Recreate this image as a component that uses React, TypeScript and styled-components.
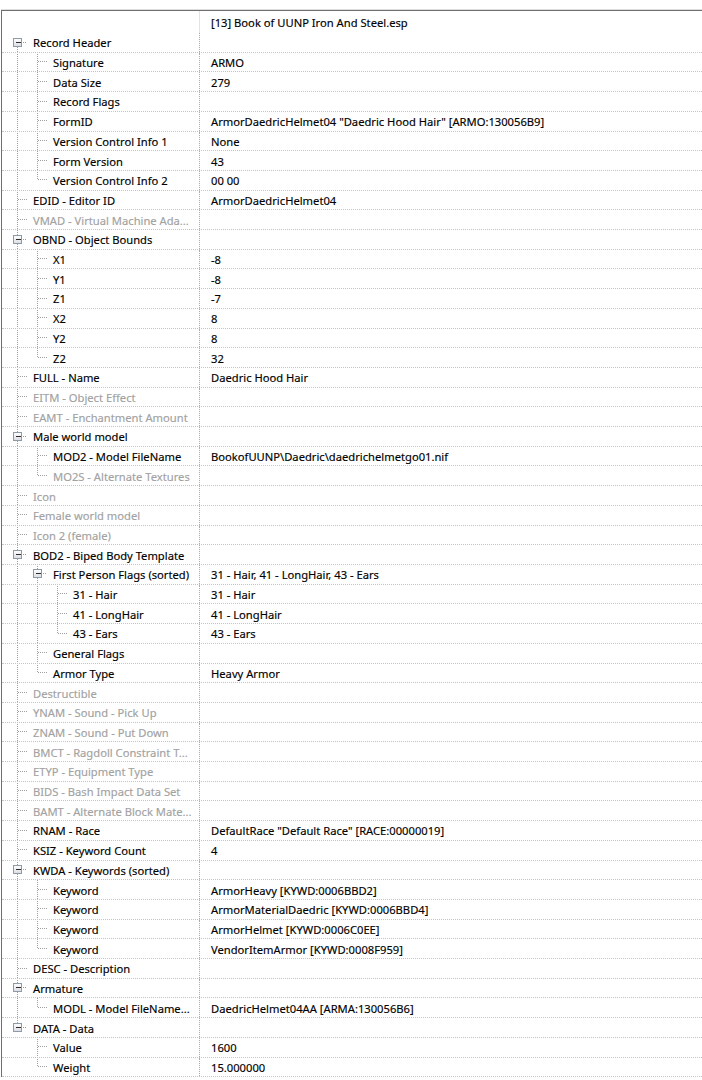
import React from 'react';
import styled, { createGlobalStyle } from 'styled-components';

const ROW = 19.71;
const INDENT = 20;

type Node = { label: string; value?: string; dim?: boolean; children?: Node[] };

type FlatRow = {
  node: Node;
  level: number;
  trail: boolean[];
  hasNext: boolean;
  isFirst: boolean;
};

const kw = (value: string): Node => ({ label: 'Keyword', value });
const off = (label: string): Node => ({ label, dim: true });

const tree: Node[] = [
  {
    label: 'Record Header',
    children: [
      { label: 'Signature', value: 'ARMO' },
      { label: 'Data Size', value: '279' },
      { label: 'Record Flags' },
      { label: 'FormID', value: 'ArmorDaedricHelmet04 "Daedric Hood Hair" [ARMO:130056B9]' },
      { label: 'Version Control Info 1', value: 'None' },
      { label: 'Form Version', value: '43' },
      { label: 'Version Control Info 2', value: '00 00' },
    ],
  },
  { label: 'EDID - Editor ID', value: 'ArmorDaedricHelmet04' },
  off('VMAD - Virtual Machine Ada...'),
  {
    label: 'OBND - Object Bounds',
    children: [
      { label: 'X1', value: '-8' },
      { label: 'Y1', value: '-8' },
      { label: 'Z1', value: '-7' },
      { label: 'X2', value: '8' },
      { label: 'Y2', value: '8' },
      { label: 'Z2', value: '32' },
    ],
  },
  { label: 'FULL - Name', value: 'Daedric Hood Hair' },
  off('EITM - Object Effect'),
  off('EAMT - Enchantment Amount'),
  {
    label: 'Male world model',
    children: [
      { label: 'MOD2 - Model FileName', value: 'BookofUUNP\\Daedric\\daedrichelmetgo01.nif' },
      off('MO2S - Alternate Textures'),
    ],
  },
  off('Icon'),
  off('Female world model'),
  off('Icon 2 (female)'),
  {
    label: 'BOD2 - Biped Body Template',
    children: [
      {
        label: 'First Person Flags (sorted)',
        value: '31 - Hair, 41 - LongHair, 43 - Ears',
        children: [
          { label: '31 - Hair', value: '31 - Hair' },
          { label: '41 - LongHair', value: '41 - LongHair' },
          { label: '43 - Ears', value: '43 - Ears' },
        ],
      },
      { label: 'General Flags' },
      { label: 'Armor Type', value: 'Heavy Armor' },
    ],
  },
  off('Destructible'),
  off('YNAM - Sound - Pick Up'),
  off('ZNAM - Sound - Put Down'),
  off('BMCT - Ragdoll Constraint T...'),
  off('ETYP - Equipment Type'),
  off('BIDS - Bash Impact Data Set'),
  off('BAMT - Alternate Block Mate...'),
  { label: 'RNAM - Race', value: 'DefaultRace "Default Race" [RACE:00000019]' },
  { label: 'KSIZ - Keyword Count', value: '4' },
  {
    label: 'KWDA - Keywords (sorted)',
    children: [
      kw('ArmorHeavy [KYWD:0006BBD2]'),
      kw('ArmorMaterialDaedric [KYWD:0006BBD4]'),
      kw('ArmorHelmet [KYWD:0006C0EE]'),
      kw('VendorItemArmor [KYWD:0008F959]'),
    ],
  },
  { label: 'DESC - Description' },
  {
    label: 'Armature',
    children: [{ label: 'MODL - Model FileName...', value: 'DaedricHelmet04AA [ARMA:130056B6]' }],
  },
  {
    label: 'DATA - Data',
    children: [
      { label: 'Value', value: '1600' },
      { label: 'Weight', value: '15.000000' },
    ],
  },
];

const flatten = (nodes: Node[], level = 0, trail: boolean[] = [], out: FlatRow[] = []) => {
  nodes.forEach((node, i) => {
    const hasNext = i < nodes.length - 1;
    out.push({ node, level, trail, hasNext, isFirst: level === 0 && i === 0 });
    if (node.children) flatten(node.children, level + 1, [...trail, hasNext], out);
  });
  return out;
};

const rows = flatten(tree);

const GlobalStyle = createGlobalStyle`
  html, body {
    margin: 0;
    background: #ffffff;
  }
  body {
    font-family: "Noto Sans", "Open Sans", sans-serif;
    font-size: 11.2px;
    color: #000000;
    -webkit-text-stroke: 0.15px currentColor;
  }
`;

const Page = styled.div`
  padding-top: 9px;
  padding-left: 1px;
  width: 702px;
  box-sizing: border-box;
`;

const Frame = styled.div`
  border-top: 1px solid #dedede;
`;

const Grid = styled.div`
  border-top: 1px solid #6f6f6f;
  border-left: 1px solid #6f6f6f;
`;

const HeaderRow = styled.div`
  display: grid;
  grid-template-columns: 198px 1fr;
  height: 22px;
`;

const HeaderCell = styled.div<{ $first?: boolean }>`
  display: flex;
  align-items: center;
  padding-top: 1px;
  padding-left: ${(p) => (p.$first ? '0' : '11px')};
  border-right: ${(p) => (p.$first ? '1px solid #e3e3e3' : 'none')};
  white-space: nowrap;
  overflow: hidden;
`;

const Row = styled.div`
  display: grid;
  grid-template-columns: 198px 1fr;
  height: ${ROW}px;
  box-sizing: border-box;
  border-bottom: 1px dotted #c4c4c4;
`;

const NameCell = styled.div`
  display: flex;
  align-items: center;
  border-right: 1px dotted #a9a9a9;
  overflow: hidden;
  white-space: nowrap;
`;

const Label = styled.span<{ $dim?: boolean }>`
  margin-left: 6px;
  padding-top: 1px;
  color: ${(p) => (p.$dim ? '#a2a2a2' : '#000000')};
`;

const ValueCell = styled.div`
  display: flex;
  align-items: center;
  padding-top: 1px;
  padding-left: 11px;
  white-space: nowrap;
  overflow: hidden;
`;

const Guides = styled.svg`
  flex-shrink: 0;
  display: block;
`;

const LINE = '#a0a0a0';

const TreeGuide = ({ row }: { row: FlatRow }) => {
  const { level, trail, hasNext, isFirst, node } = row;
  const width = (level + 1) * INDENT + 5;
  const mid = Math.floor(ROW / 2) + 0.5;
  const colX = (d: number) => 15 + d * INDENT + 0.5;
  const x = colX(level);
  const expandable = !!node.children;

  return (
    <Guides width={width} height={ROW} shapeRendering="crispEdges">
      {trail.map((more, d) =>
        more ? (
          <line key={d} x1={colX(d)} y1={0} x2={colX(d)} y2={ROW} stroke={LINE} strokeDasharray="1 1" />
        ) : null,
      )}
      {!isFirst && <line x1={x} y1={0} x2={x} y2={mid} stroke={LINE} strokeDasharray="1 1" />}
      {hasNext && <line x1={x} y1={mid} x2={x} y2={ROW} stroke={LINE} strokeDasharray="1 1" />}
      <line x1={expandable ? x + 5 : x} y1={mid} x2={x + 13} y2={mid} stroke={LINE} strokeDasharray="1 1" />
      {expandable && (
        <g>
          <defs>
            <linearGradient id="boxFill" x1="0" y1="0" x2="0" y2="1">
              <stop offset="0" stopColor="#ffffff" />
              <stop offset="1" stopColor="#d9dce2" />
            </linearGradient>
          </defs>
          <rect x={x - 4} y={mid - 4} width={8} height={8} fill="url(#boxFill)" stroke="#8f9aa8" />
          <line x1={x - 2} y1={mid} x2={x + 3} y2={mid} stroke="#2b2b2b" />
        </g>
      )}
    </Guides>
  );
};

const App = () => (
  <>
    <GlobalStyle />
    <Page>
      <Frame>
        <Grid>
          <HeaderRow>
            <HeaderCell $first />
            <HeaderCell>[13] Book of UUNP Iron And Steel.esp</HeaderCell>
          </HeaderRow>
          {rows.map((row, i) => (
            <Row key={i}>
              <NameCell>
                <TreeGuide row={row} />
                <Label $dim={row.node.dim}>{row.node.label}</Label>
              </NameCell>
              <ValueCell>{row.node.value}</ValueCell>
            </Row>
          ))}
        </Grid>
      </Frame>
    </Page>
  </>
);

export default App;
